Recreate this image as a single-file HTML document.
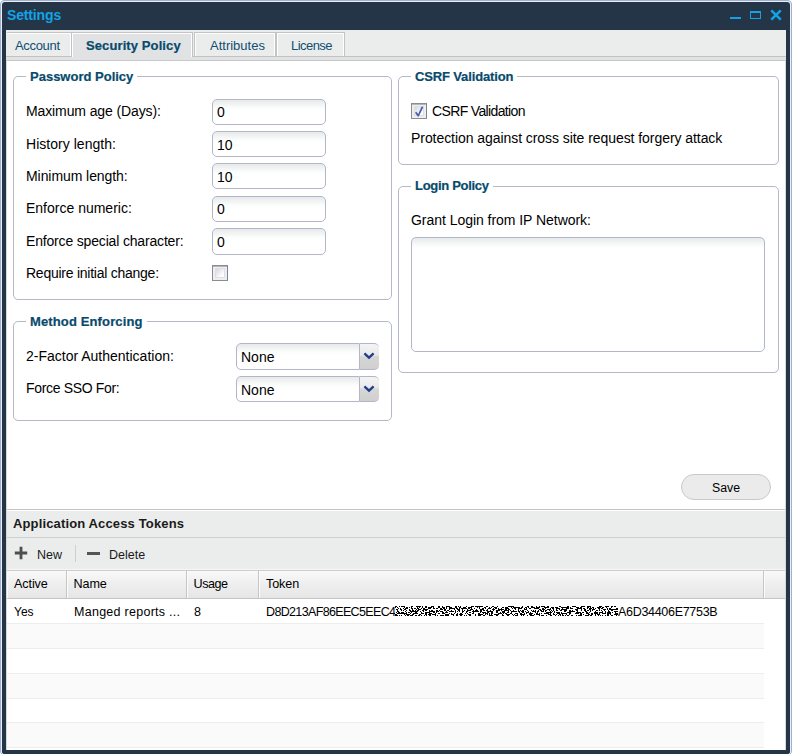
<!DOCTYPE html>
<html>
<head>
<meta charset="utf-8">
<title>Settings</title>
<style>
*{box-sizing:border-box;margin:0;padding:0}
html,body{width:792px;height:754px;overflow:hidden;background:#fff}
body{font-family:"Liberation Sans",sans-serif;color:#000;position:relative}
.abs{position:absolute}
.t{position:absolute;white-space:nowrap;line-height:1;transform-origin:0 0}
/* window frame */
#outer{position:absolute;left:0;top:0;width:792px;height:756px;background:#e9eefa;border:1px solid #9fb0cc;border-radius:4px 4px 5px 5px}
#frame{position:absolute;left:2px;top:2px;width:788px;height:752px;background:#243547;border-radius:3px}
#title{left:7px;top:8px;font-size:14px;font-weight:bold;color:#12a3e6;letter-spacing:-0.15px}
#body{position:absolute;left:6px;top:30px;width:780px;height:720px;background:#fff;border-left:1px solid #d8d8d8;border-right:1px solid #d8d8d8}
/* tabs */
#tabstrip{position:absolute;left:6px;top:30px;width:780px;height:27px;background:#ebecec;border-bottom:1px solid #c2c2c2}
#tabspacer{position:absolute;left:6px;top:57px;width:780px;height:4px;background:#e1e2e3;border-bottom:1px solid #c8c8c8}
.tab{position:absolute;top:32px;height:24px;background:#ebecec;border-top:1px solid #c3c3c3;border-right:1px solid #c3c3c3;box-shadow:inset 1px 1px 0 #fff,inset -1px 0 0 #fff}
.tab.lb1{border-left:1px solid #c3c3c3}
.tab.on{background:#e1e2e3;height:25px}
.tabt{font-size:13px;color:#0f4f72}
/* fieldsets */
.fs{position:absolute;border:1px solid #b5b8c8;border-radius:5px}
.lg{font-size:13px;font-weight:bold;color:#084a6c;-webkit-text-stroke:0.2px #084a6c;background:#fff;padding:0 4px}
.lb{font-size:14px;color:#000}
.inp{position:absolute;height:26px;width:114px;border:1px solid #b3b6c9;border-radius:5px;background:linear-gradient(#e6e9ea 0,#f1f3f3 4px,#fbfcfc 8px,#fff 11px)}
.val{font-size:14px}
.cb{position:absolute;width:16px;height:16px;border:1px solid #8c8c8c;border-right-color:#74879a;background:#eeeeee;box-shadow:inset 0 1px 0 #b4b4b4}
.cb i{position:absolute;left:2px;top:2px;width:10px;height:10px;border:1px solid #dcdfe3;background:linear-gradient(135deg,#d3d8e0,#fff 80%)}
.trg{position:absolute;width:19px;height:26px;border-top:1px solid #b3b6c9;border-bottom:1px solid #b3b6c9;border-radius:0 5px 5px 0;background:linear-gradient(#f4f4f4 0,#e9e9e9 45%,#d6d6d6 50%,#cfcfcf 100%)}
/* lower panel */
.bar{position:absolute;left:7px;width:778px;background:#ebecec}
.gh{position:absolute;top:571px;height:27px;background:linear-gradient(#f9f9f9,#eeeeee 50%,#e6e6e6);border-right:1px solid #c6c6c6;box-shadow:inset 1px 0 0 #fbfbfb}
.row{position:absolute;left:7px;width:757px;height:25px;border-bottom:1px solid #ededed}
.row.alt{background:#fafafa}
.ct{font-size:12.5px}
.ht{font-size:12.6px;letter-spacing:-0.1px}
</style>
</head>
<body>
<div id="outer"></div>
<div id="frame"></div>
<div class="t" id="title">Settings</div>
<!-- window tools -->
<svg class="abs" style="left:726px;top:6px" width="60" height="18" viewBox="0 0 60 18">
  <rect x="4" y="11" width="11" height="2" fill="#12a3e6"/>
  <rect x="24.5" y="5.5" width="10" height="7" fill="none" stroke="#12a3e6" stroke-width="1"/>
  <rect x="24" y="5" width="11" height="2" fill="#12a3e6"/>
  <path d="M45.3 4.3 L54.7 13.7 M54.7 4.3 L45.3 13.7" stroke="#12a3e6" stroke-width="2.6" fill="none"/>
</svg>
<div id="body"></div>
<div id="tabstrip"></div>
<div id="tabspacer"></div>
<div class="tab" style="left:7px;width:65px;box-shadow:inset 0 1px 0 #fff,inset -1px 0 0 #fff"></div>
<div class="tab on" style="left:72px;width:121px"></div>
<div class="tab lb1" style="left:194px;width:82px"></div>
<div class="tab lb1" style="left:276px;width:69px"></div>
<div class="t tabt" style="left:15px;top:39px;letter-spacing:-0.33px">Account</div>
<div class="t tabt" style="left:86px;top:39px;font-weight:bold;color:#084a6c;-webkit-text-stroke:0.2px #084a6c;letter-spacing:0.1px">Security Policy</div>
<div class="t tabt" style="left:210px;top:39px">Attributes</div>
<div class="t tabt" style="left:291px;top:39px;letter-spacing:-0.55px">License</div>

<!-- Password Policy -->
<div class="fs" style="left:13px;top:76px;width:379px;height:224px"></div>
<div class="t lg" style="left:26px;top:70px">Password Policy</div>
<div class="t lb" style="left:26px;top:104px;letter-spacing:-0.11px">Maximum age (Days):</div>
<div class="t lb" style="left:26px;top:137px;letter-spacing:0.03px">History length:</div>
<div class="t lb" style="left:26px;top:169px;letter-spacing:-0.07px">Minimum length:</div>
<div class="t lb" style="left:26px;top:201px">Enforce numeric:</div>
<div class="t lb" style="left:26px;top:234px;letter-spacing:-0.17px">Enforce special character:</div>
<div class="t lb" style="left:26px;top:266px;letter-spacing:-0.25px">Require initial change:</div>
<div class="inp" style="left:212px;top:99px"></div>
<div class="inp" style="left:212px;top:131px"></div>
<div class="inp" style="left:212px;top:163px"></div>
<div class="inp" style="left:212px;top:196px"></div>
<div class="inp" style="left:212px;top:228px;height:27px"></div>
<div class="t val" style="left:217px;top:105px">0</div>
<div class="t val" style="left:217px;top:138px">10</div>
<div class="t val" style="left:217px;top:170px">10</div>
<div class="t val" style="left:217px;top:202px">0</div>
<div class="t val" style="left:217px;top:235px">0</div>
<div class="cb" style="left:212px;top:265px"><i></i></div>

<!-- Method Enforcing -->
<div class="fs" style="left:13px;top:321px;width:379px;height:100px"></div>
<div class="t lg" style="left:26px;top:315px;letter-spacing:0.13px">Method Enforcing</div>
<div class="t lb" style="left:26px;top:349px">2-Factor Authentication:</div>
<div class="t lb" style="left:26px;top:381px;letter-spacing:-0.33px">Force SSO For:</div>
<div class="inp" style="left:236px;top:343px;width:124px;height:27px;border-radius:5px 0 0 5px"></div>
<div class="inp" style="left:236px;top:376px;width:124px;border-radius:5px 0 0 5px"></div>
<div class="trg" style="left:360px;top:343px;height:27px"></div>
<div class="trg" style="left:360px;top:376px"></div>
<svg class="abs" style="left:363px;top:351px" width="12" height="9" viewBox="0 0 12 9"><path d="M1.4 2.3 L6 6.6 L10.6 2.3" stroke="#1f3d8a" stroke-width="2.3" fill="none"/></svg>
<svg class="abs" style="left:363px;top:384px" width="12" height="9" viewBox="0 0 12 9"><path d="M1.4 2.3 L6 6.6 L10.6 2.3" stroke="#1f3d8a" stroke-width="2.3" fill="none"/></svg>
<div class="t val" style="left:241px;top:350px">None</div>
<div class="t val" style="left:241px;top:383px">None</div>

<!-- CSRF Validation -->
<div class="fs" style="left:398px;top:76px;width:381px;height:89px"></div>
<div class="t lg" style="left:411px;top:70px;letter-spacing:-0.14px">CSRF Validation</div>
<div class="cb" style="left:411px;top:103px"><i></i></div>
<svg class="abs" style="left:411px;top:103px" width="16" height="16" viewBox="0 0 16 16"><path d="M4 9.7 L5.3 8.7 L7.2 10.9 L10.5 3.7 Q11.6 3.2 12.3 4.3 L7.9 13.3 Q7.2 14 6.5 13.3 Z" fill="#4a5cab"/></svg>
<div class="t lb" style="left:432px;top:104px;letter-spacing:-0.64px">CSRF Validation</div>
<div class="t lb" style="left:411px;top:131px;letter-spacing:-0.06px">Protection against cross site request forgery attack</div>

<!-- Login Policy -->
<div class="fs" style="left:398px;top:186px;width:381px;height:187px"></div>
<div class="t lg" style="left:411px;top:179px;letter-spacing:-0.3px">Login Policy</div>
<div class="t lb" style="left:411px;top:213px;letter-spacing:-0.04px">Grant Login from IP Network:</div>
<div class="inp" style="left:411px;top:237px;width:354px;height:115px"></div>

<!-- Save -->
<div class="abs" style="left:681px;top:474px;width:90px;height:26px;border:1px solid #c9c9c9;border-radius:13px;background:#ebebeb"></div>
<div class="t" style="left:712px;top:482px;font-size:12.3px">Save</div>

<!-- Application Access Tokens -->
<div class="abs" style="left:7px;top:509px;width:778px;height:1px;background:#c3c3c3"></div>
<div class="bar" style="top:511px;height:26px"></div>
<div class="abs" style="left:7px;top:537px;width:778px;height:1px;background:#d0d0d0"></div>
<div class="t" style="left:13px;top:517px;font-size:13px;font-weight:bold;color:#1a1a1a;letter-spacing:0.14px">Application Access Tokens</div>
<div class="bar" style="top:538px;height:31px"></div>
<div class="abs" style="left:7px;top:569px;width:778px;height:1px;background:#f6f6f6"></div>
<svg class="abs" style="left:14.4px;top:546.4px" width="14" height="14" viewBox="0 0 14 14"><path d="M7 0.8 V13.2 M0.8 7 H13.2" stroke="#4e4e4e" stroke-width="2.8" fill="none"/></svg>
<div class="t" style="left:37px;top:549px;font-size:12.5px;color:#1a1a1a">New</div>
<div class="abs" style="left:75px;top:545px;width:1px;height:17px;background:#cfcfcf"></div>
<div class="abs" style="left:87px;top:552px;width:13px;height:3px;background:#555"></div>
<div class="t" style="left:109px;top:549px;font-size:12.5px;color:#1a1a1a">Delete</div>
<!-- grid header -->
<div class="abs" style="left:7px;top:570px;width:778px;height:1px;background:#cdcdcd"></div>
<div class="gh" style="left:7px;width:60px"></div>
<div class="gh" style="left:67px;width:120px"></div>
<div class="gh" style="left:187px;width:72px"></div>
<div class="gh" style="left:259px;width:505px"></div>
<div class="gh" style="left:764px;width:21px;border-right:none"></div>
<div class="abs" style="left:7px;top:598px;width:778px;height:1px;background:#c4c4c4"></div>
<div class="t ht" style="left:14px;top:578px">Active</div>
<div class="t ht" style="left:73.5px;top:578px">Name</div>
<div class="t ht" style="left:193.5px;top:578px;letter-spacing:-0.45px">Usage</div>
<div class="t ht" style="left:266px;top:578px">Token</div>
<!-- rows -->
<div class="row" style="top:599px"></div>
<div class="row alt" style="top:624px"></div>
<div class="row" style="top:649px"></div>
<div class="row alt" style="top:674px"></div>
<div class="row" style="top:699px;height:24px"></div>
<div class="row alt" style="top:723px"></div>
<div class="t ct" style="left:14px;top:606px;font-size:12px">Yes</div>
<div class="t ct" style="left:74px;top:606px;letter-spacing:0.27px">Manged reports&nbsp;...</div>
<div class="t ct" style="left:194px;top:606px">8</div>
<div class="t ct" style="left:266px;top:606px;letter-spacing:-0.65px">D8D213AF86EEC5EEC4</div>
<div class="t ct" style="left:618px;top:606px;letter-spacing:-0.3px">A6D34406E7753B</div>
<svg class="abs" style="left:395px;top:606px" width="223" height="10" viewBox="0 0 223 10">
  <filter id="nz" x="0" y="0" width="100%" height="100%" color-interpolation-filters="sRGB">
    <feTurbulence type="fractalNoise" baseFrequency="0.55 0.6" numOctaves="2" seed="7" result="t"/>
    <feColorMatrix type="matrix" values="1 0 0 0 0  1 0 0 0 0  1 0 0 0 0  0 0 0 0 1"/>
    <feComponentTransfer><feFuncR type="discrete" tableValues="0 0 0 0 0 1 1 1 1 1"/><feFuncG type="discrete" tableValues="0 0 0 0 0 1 1 1 1 1"/><feFuncB type="discrete" tableValues="0 0 0 0 0 1 1 1 1 1"/></feComponentTransfer>
  </filter>
  <rect width="223" height="10" filter="url(#nz)"/>
</svg>
<!-- bottom frame -->
<div class="abs" style="left:2px;top:750px;width:788px;height:4px;background:#243547;border-radius:0 0 3px 3px"></div>
</body>
</html>
